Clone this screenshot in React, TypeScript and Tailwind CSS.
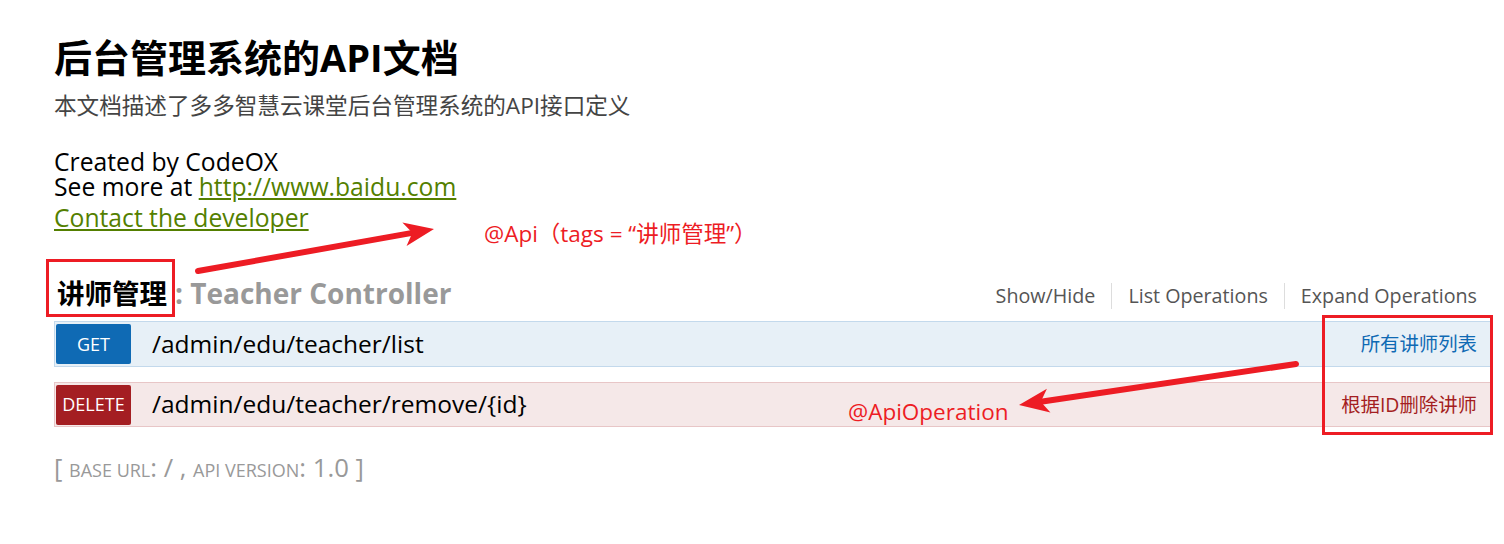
import React from "react";

const FONT = { fontFamily: "'Open Sans','Noto Sans CJK SC',sans-serif" };

function Arrow({ x1, y1, x2, y2 }: { x1: number; y1: number; x2: number; y2: number }) {
  const dx = x2 - x1;
  const dy = y2 - y1;
  const len = Math.hypot(dx, dy);
  const ux = dx / len;
  const uy = dy / len;
  const nx = -uy;
  const ny = ux;
  const hl = 30;
  const hw = 12;
  const bx = x2 - ux * hl;
  const by = y2 - uy * hl;
  const nxp = x2 - ux * (hl - 8);
  const nyp = y2 - uy * (hl - 8);
  const p = `${x2},${y2} ${bx + nx * hw},${by + ny * hw} ${nxp},${nyp} ${bx - nx * hw},${by - ny * hw}`;
  return (
    <g>
      <line x1={x1} y1={y1} x2={nxp} y2={nyp} stroke="#ed1c24" strokeWidth={6} strokeLinecap="round" />
      <polygon points={p} fill="#ed1c24" />
    </g>
  );
}

export default function App() {
  return (
    <div className="relative w-[1504px] h-[544px] bg-white overflow-hidden" style={FONT}>
      <div className="pl-[54px] pr-[12px] pt-[33px]">
        <h1 className="text-[38px] leading-[48px] font-bold text-black">后台管理系统的API文档</h1>
        <p className="mt-[10px] text-[22.6px] leading-[30px] text-[#444]">本文档描述了多多智慧云课堂后台管理系统的API接口定义</p>
        <div className="mt-[28px] text-[24.7px] leading-[25px] text-black">
          <div>Created by CodeOX</div>
          <div>
            See more at <a className="text-[#547f00] underline">http://www.baidu.com</a>
          </div>
        </div>
        <div className="mt-[4px] text-[24.7px] leading-[30px]">
          <a className="text-[#547f00] underline">Contact the developer</a>
        </div>

        <div className="mt-[42px] flex items-end justify-between">
          <h2 className="leading-[36px] font-bold pl-[3px] flex items-baseline">
            <span className="text-black text-[27.5px]">讲师管理</span>
            <span className="text-[#999] text-[28px] ml-[8px]">: Teacher Controller</span>
          </h2>
          <div className="flex text-[19.7px] leading-[26px] text-[#555] mb-[3px]">
            <span className="px-[16px] border-r border-[#ddd]">Show/Hide</span>
            <span className="px-[16px] border-r border-[#ddd]">List Operations</span>
            <span className="pl-[16px] pr-[15px]">Expand Operations</span>
          </div>
        </div>

        <div className="mt-[9px] h-[46px] flex items-center border border-[#c3d9ec] bg-[#e7f0f7] pl-[1px] pr-[14px]">
          <span className="w-[75px] h-[40px] rounded-[2px] bg-[#0f6ab4] text-white text-[18px] flex items-center justify-center">GET</span>
          <span className="ml-[21px] text-[24.5px] text-black">/admin/edu/teacher/list</span>
          <span className="ml-auto text-[19.4px] text-[#0f6ab4]">所有讲师列表</span>
        </div>

        <div className="mt-[15px] h-[45px] flex items-center border border-[#e8c6c7] bg-[#f5e8e8] pl-[1px] pr-[14px]">
          <span className="w-[75px] h-[40px] rounded-[2px] bg-[#a41e22] text-white text-[18px] flex items-center justify-center">DELETE</span>
          <span className="ml-[21px] text-[24.5px] text-black">/admin/edu/teacher/remove/{"{id}"}</span>
          <span className="ml-auto text-[19.4px] text-[#a41e22]">根据ID删除讲师</span>
        </div>

        <div className="mt-[26px] text-[#999] text-[25.7px] leading-[30px]">
          [ <span className="text-[18px]">BASE URL</span>: / , <span className="text-[18px]">API VERSION</span>: 1.0 ]
        </div>
      </div>

      {/* annotations */}
      <div className="absolute left-[46px] top-[259px] w-[129px] h-[58px] border-[3px] border-[#ed1c24]" />
      <div className="absolute left-[1322px] top-[315px] w-[171px] h-[120px] border-[3px] border-[#ed1c24]" />
      <div className="absolute left-[484px] top-[219px] text-[22.5px] leading-[30px] text-[#ed1c24]">@Api（tags = “讲师管理”）</div>
      <div className="absolute left-[848px] top-[397px] text-[22.5px] leading-[30px] text-[#ed1c24]">@ApiOperation</div>
      <svg className="absolute inset-0 pointer-events-none" width={1504} height={544}>
        <Arrow x1={198} y1={271} x2={434} y2={229} />
        <Arrow x1={1296} y1={364} x2={1019} y2={405} />
      </svg>
    </div>
  );
}
